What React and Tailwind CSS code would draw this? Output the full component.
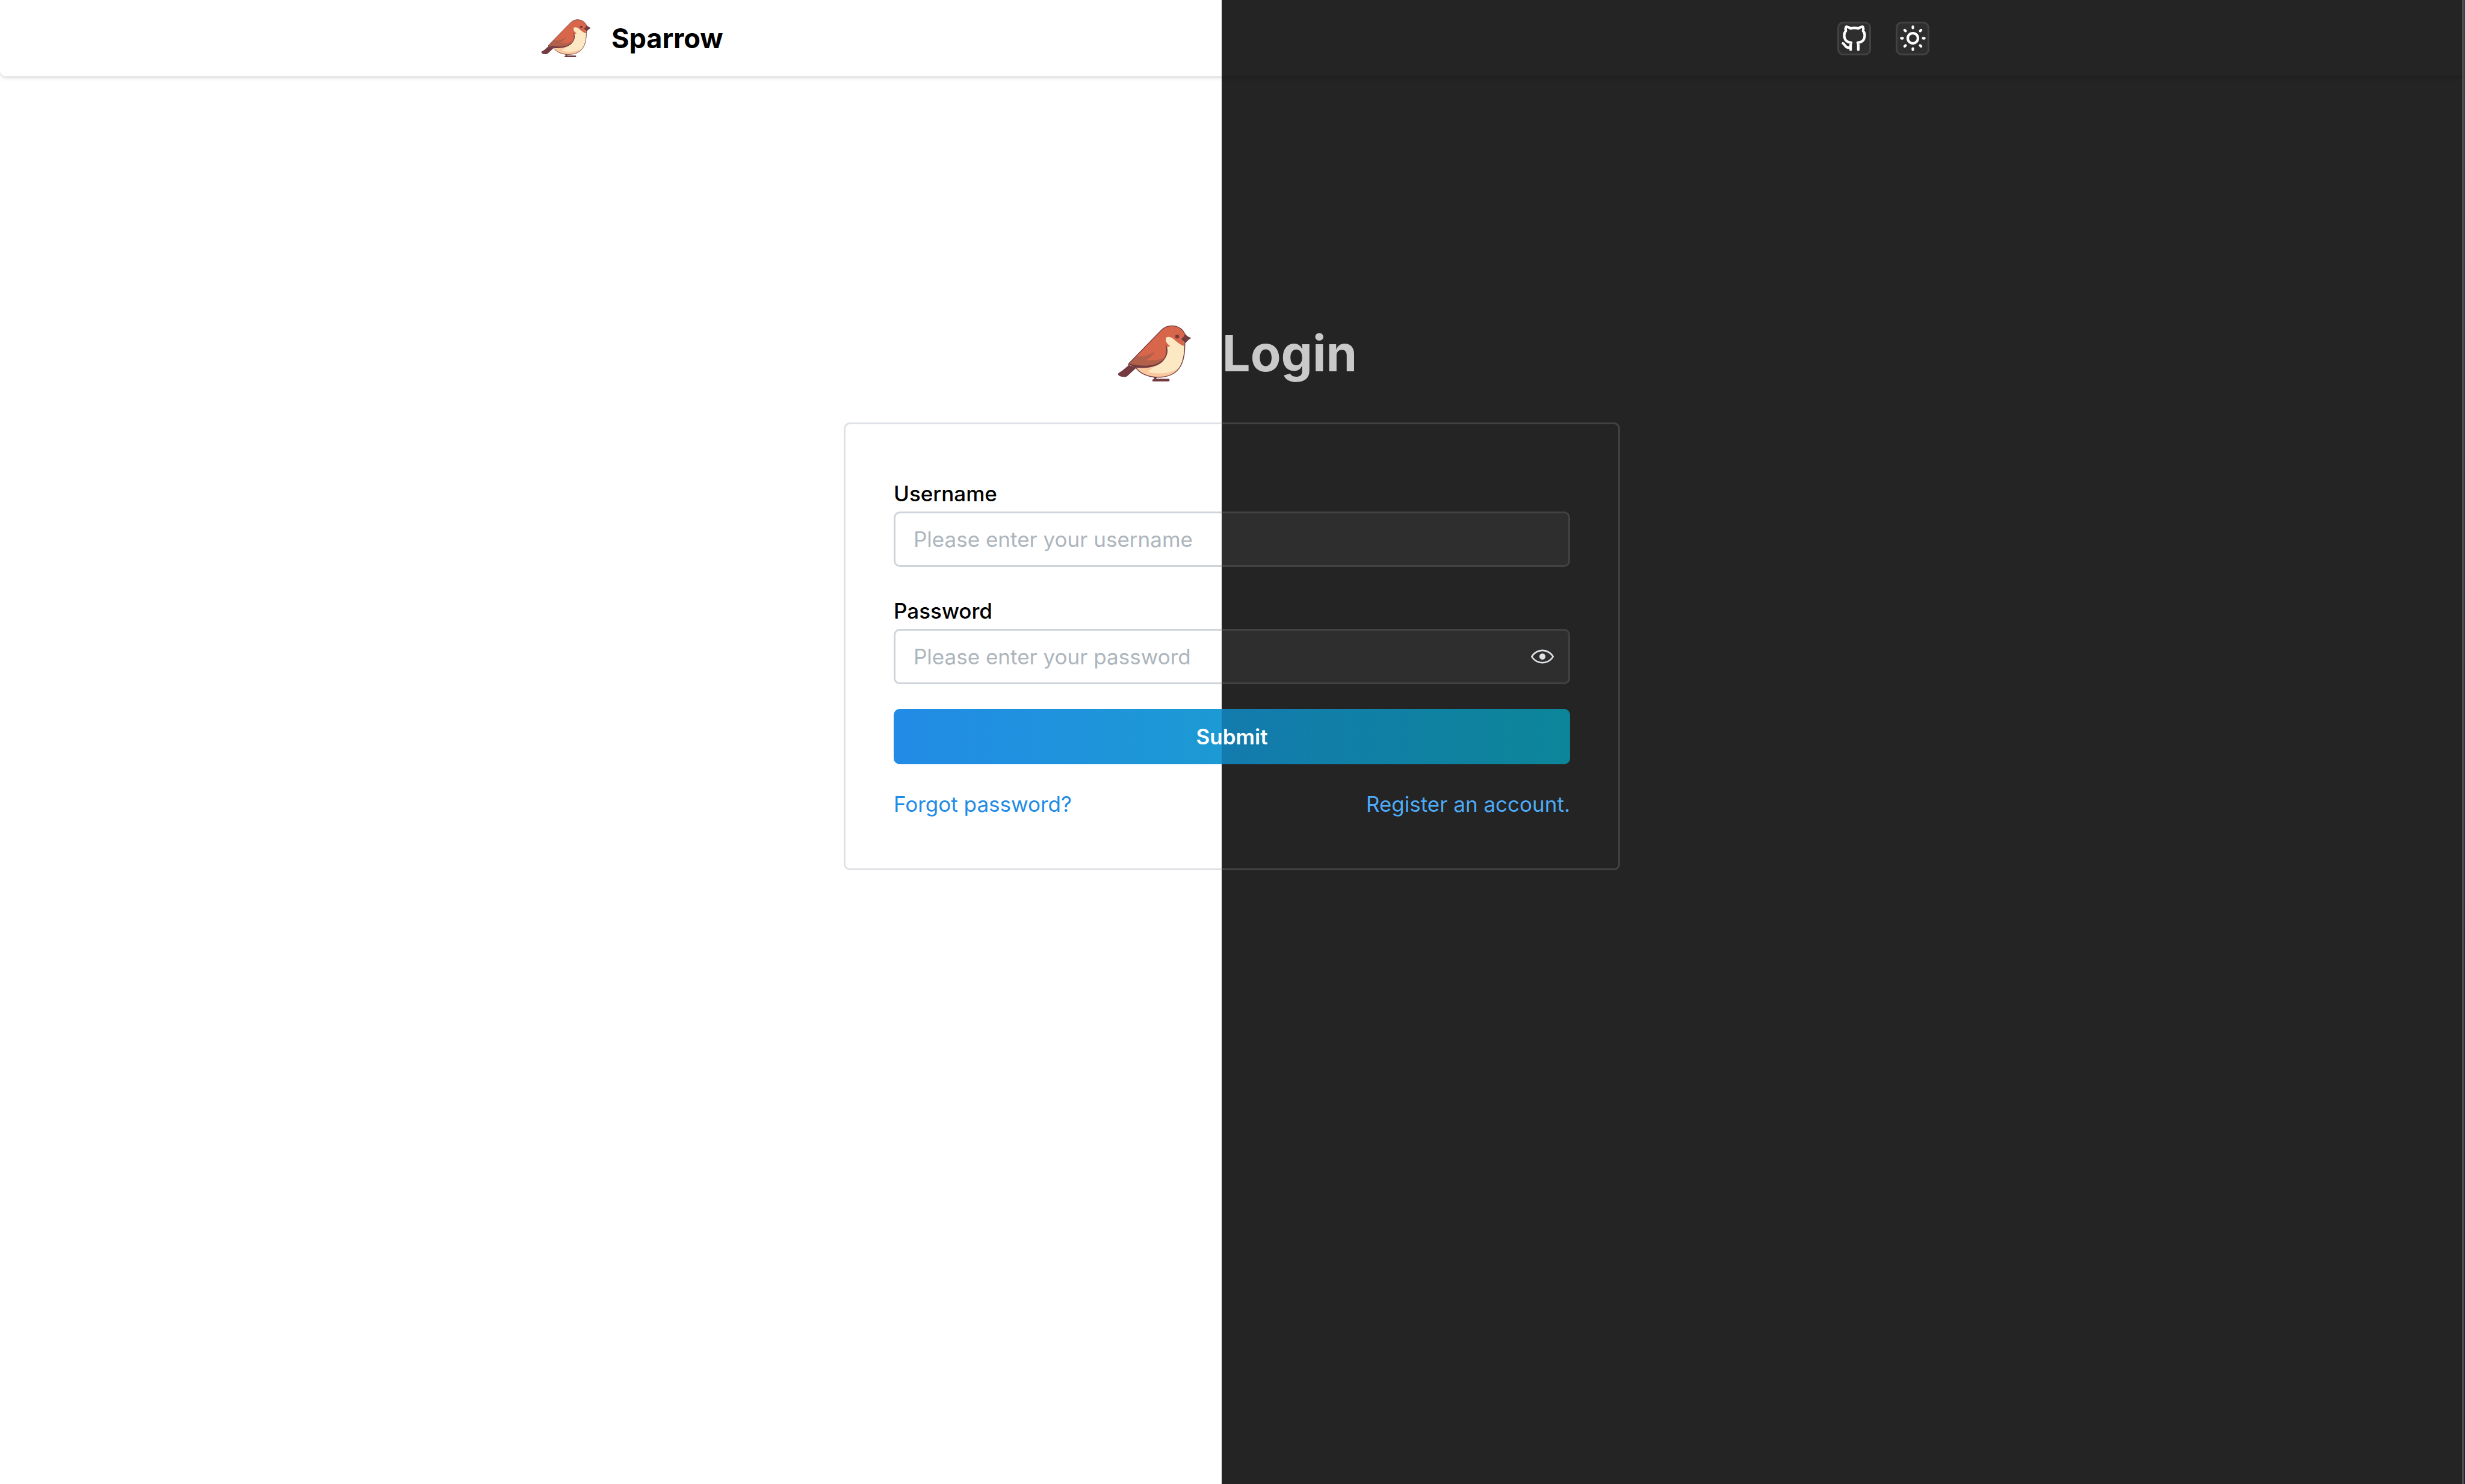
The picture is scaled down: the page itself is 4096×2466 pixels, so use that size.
const SPLIT_PAGE =
  "bg-[linear-gradient(90deg,#ffffff_49.56%,#242424_49.56%)] bg-fixed";

const SPLIT_CARD =
  "border-3 border-transparent bg-[linear-gradient(90deg,#ffffff_49.56%,#242424_49.56%),linear-gradient(90deg,#dee2e6_49.56%,#424242_49.56%)] bg-fixed [background-clip:padding-box,border-box]";

const SPLIT_INPUT =
  "border-3 border-transparent bg-[linear-gradient(90deg,#ffffff_49.56%,#2e2e2e_49.56%),linear-gradient(90deg,#ced4da_49.56%,#424242_49.56%)] bg-fixed [background-clip:padding-box,border-box]";

function Bird({ className }) {
  return (
    <svg viewBox="16 22 462 360" className={className} aria-hidden="true">
      {/* tail */}
      <path
        d="M86 276L136 290L78 344Q70 351 58 350L38 348Q28 345 20 337Q17 330 23 325L46 310Z"
        fill="#733b3f"
      />
      {/* leg and foot */}
      <path
        d="M236 348H266L256 362H334Q342 364 341 371Q340 378 332 378H234V366L246 362Z"
        fill="#733b3f"
      />
      {/* breast */}
      <path
        d="M290 57C335 15 410 22 438 85L436 140C436 200 430 258 397 300C362 343 312 352 265 352C210 350 163 333 133 296L200 180Z"
        fill="#fde8c4"
      />
      <path
        d="M133 296L245 286C228 302 214 309 208 318C255 332 345 335 404 290C370 343 312 352 265 352C210 350 163 333 133 296Z"
        fill="#fbc9a0"
      />
      {/* head and back */}
      <path
        d="M86 267L290 57C335 15 410 22 438 85L416 112L432 140V154Q427 157 420 153C397 142 380 126 365 113C350 101 330 96 320 104C313 114 318 130 326 141C333 149 341 152 343 157Q336 162 325 162C330 220 295 265 235 284C180 292 130 287 86 275Z"
        fill="#d8664b"
      />
      <path
        d="M86 267L131 221C175 226 218 214 252 187C238 216 214 233 194 244C230 250 272 244 308 232C285 268 225 292 170 286L90 278Z"
        fill="#b3604b"
      />
      {/* wing edge */}
      <path
        d="M86 270L130 292C210 299 268 285 300 251C322 227 331 200 327 175C325 162 320 153 315 147C320 165 322 185 318 205C312 235 288 258 255 270C210 285 150 282 92 268Z"
        fill="#733b3f"
      />
      {/* outline */}
      <path
        d="M88 278Q81 272 88 265L290 57C335 15 410 22 438 85M436 136C436 200 430 258 397 300C362 343 312 352 265 352C210 350 163 333 133 296"
        fill="none"
        stroke="#733b3f"
        strokeWidth="5"
        strokeLinecap="round"
      />
      {/* beak */}
      <path
        d="M438 82Q450 97 476 107Q454 118 438 140Q424 128 414 112Q429 100 438 82Z"
        fill="#733b3f"
      />
      <circle cx="388" cy="98" r="12" fill="#733b3f" />
    </svg>
  );
}

function StrokeIcon({ children }) {
  return (
    <svg
      viewBox="0 0 24 24"
      className="size-[51px] shrink-0"
      fill="none"
      stroke="currentColor"
      strokeWidth="2"
      strokeLinecap="round"
      strokeLinejoin="round"
      aria-hidden="true"
    >
      {children}
    </svg>
  );
}

const ICON_BUTTON =
  "flex size-14 items-center justify-center rounded-[10px] border-3 border-[#424242] bg-[#2e2e2e] text-white";

function Header() {
  return (
    <header
      className={`flex h-[127px] justify-center rounded-b-[10px] pr-0.5 shadow-[0_2px_8px_rgba(0,0,0,0.12),0_1px_3px_rgba(0,0,0,0.12)] ${SPLIT_PAGE}`}
    >
      <div className="flex w-full max-w-[2318px] items-center justify-between">
        <div className="flex items-center gap-[34px] pl-[11px]">
          <Bird className="h-[65px] w-[83px]" />
          <span className="text-[45px] leading-[56px] font-bold text-black">Sparrow</span>
        </div>
        <div className="flex items-center gap-[41px]">
          <button type="button" aria-label="GitHub" className={ICON_BUTTON}>
            <StrokeIcon>
              <path d="M9 19c-4.3 1.4 -4.3 -2.5 -6 -3m12 5v-3.5c0 -1 .1 -1.4 -.5 -2c2.8 -.3 5.5 -1.4 5.5 -6a4.6 4.6 0 0 0 -1.3 -3.2a4.2 4.2 0 0 0 -.1 -3.2s-1.1 -.3 -3.5 1.3a12.3 12.3 0 0 0 -6.2 0c-2.4 -1.6 -3.5 -1.3 -3.5 -1.3a4.2 4.2 0 0 0 -.1 3.2a4.6 4.6 0 0 0 -1.3 3.2c0 4.6 2.7 5.7 5.5 6c-.6 .6 -.6 1.2 -.5 2v3.5" />
            </StrokeIcon>
          </button>
          <button type="button" aria-label="Toggle colour scheme" className={ICON_BUTTON}>
            <StrokeIcon>
              <circle cx="12" cy="12" r="4" />
              <path d="M3 12h1m8 -9v1m8 8h1m-9 8v1m-6.4 -15.4l.7 .7m12.1 -.7l-.7 .7m0 11.4l.7 .7m-12.1 -.7l-.7 .7" />
            </StrokeIcon>
          </button>
        </div>
      </div>
    </header>
  );
}

const LABEL = "mb-[3px] block text-[35px] leading-[54px] font-medium text-black";
const FIELD = `block h-[92px] w-full rounded-[10px] px-[30px] text-[35px] text-[#c9c9c9] outline-none placeholder:text-[#adb5bd] placeholder:opacity-100 ${SPLIT_INPUT}`;

function LoginForm() {
  return (
    <form
      className={`mt-[62px] w-full max-w-[1290px] rounded-[10px] px-20 pt-[88px] pb-20 ${SPLIT_CARD}`}
      onSubmit={(e) => e.preventDefault()}
    >
      <label htmlFor="username" className={LABEL}>
        Username
      </label>
      <input id="username" type="text" placeholder="Please enter your username" className={FIELD} />

      <div className="mt-[46px]">
        <label htmlFor="password" className={LABEL}>
          Password
        </label>
        <div className="relative">
          <input
            id="password"
            type="password"
            placeholder="Please enter your password"
            className={FIELD}
          />
          <button
            type="button"
            aria-label="Show password"
            className="absolute inset-y-0 right-0 flex w-[92px] items-center justify-center text-[#dee2e6]"
          >
            <svg viewBox="0 0 15 15" className="size-[38px]" fill="currentColor" aria-hidden="true">
              <path
                fillRule="evenodd"
                clipRule="evenodd"
                d="M7.5 11C4.80285 11 2.52952 9.62184 1.09622 7.50001C2.52952 5.37816 4.80285 4 7.5 4C10.1971 4 12.4705 5.37816 13.9038 7.50001C12.4705 9.62183 10.1971 11 7.5 11ZM7.5 3C4.30786 3 1.65639 4.70638 0.0760002 7.23501C-0.0253338 7.39715 -0.0253334 7.60288 0.0760014 7.76501C1.65639 10.2936 4.30786 12 7.5 12C10.6921 12 13.3436 10.2936 14.924 7.76501C15.0253 7.60288 15.0253 7.39715 14.924 7.23501C13.3436 4.70638 10.6921 3 7.5 3ZM7.5 9.5C8.60457 9.5 9.5 8.60457 9.5 7.5C9.5 6.39543 8.60457 5.5 7.5 5.5C6.39543 5.5 5.5 6.39543 5.5 7.5C5.5 8.60457 6.39543 9.5 7.5 9.5Z"
              />
            </svg>
          </button>
        </div>
      </div>

      <button
        type="submit"
        className="mt-[41px] block h-[92px] w-full rounded-[10px] bg-[linear-gradient(90deg,#228be6_0%,#1c9ad3_48.5%,#137bae_48.5%,#0c8599_100%)] text-[35px] font-semibold text-white"
      >
        Submit
      </button>

      <div className="mt-[39px] flex justify-between text-[35px] leading-[54px]">
        <a href="#forgot" className="text-[#228be6]">
          Forgot password?
        </a>
        <a href="#register" className="text-[#4dabf7]">
          Register an account.
        </a>
      </div>
    </form>
  );
}

export default function App() {
  return (
    <div className={`relative min-h-screen font-['Inter',sans-serif] ${SPLIT_PAGE}`}>
      <Header />
      <main className="flex flex-col items-center pt-[407px] pr-0.5">
        <div className="flex h-[106px] items-center gap-[51px] pl-[18px]">
          <Bird className="h-[96px] w-[123px]" />
          <h1 className="text-[83px] leading-[106px] font-bold text-[#c9c9c9]">Login</h1>
        </div>
        <LoginForm />
      </main>
      {/* window frame along the right edge */}
      <div className="absolute inset-y-0 right-0 flex" aria-hidden="true">
        <div className="w-[3px] bg-[#4d4d4d]" />
        <div className="w-px bg-black" />
        <div className="w-px bg-linear-to-b from-[#41697a] to-[#1d3b5c]" />
      </div>
    </div>
  );
}
